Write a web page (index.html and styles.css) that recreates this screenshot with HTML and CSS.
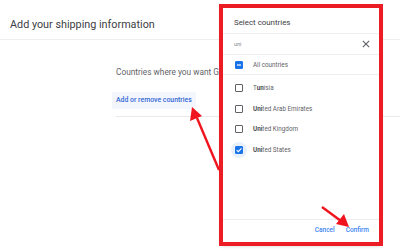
FILE: index.html
```html
<!DOCTYPE html>
<html>
<head>
<meta charset="utf-8">
<link rel="stylesheet" href="styles.css">
</head>
<body>
<div class="page">
  <header class="page-head">
    <h1 class="page-title">Add your shipping information</h1>
  </header>
  <section class="page-body">
    <p class="section-label">Countries where you want Google to show your products</p>
    <div class="link-row">
      <span class="link-btn">Add or remove countries</span>
    </div>
    <div class="section-rule"></div>
  </section>
</div>

<div class="dialog">
  <div class="dlg-title">Select countries</div>
  <div class="dlg-search">
    <span class="search-text">uni</span>
    <svg class="close-icon" viewBox="0 0 10 10" width="8" height="8"><path d="M1 1 L9 9 M9 1 L1 9" stroke="#5f6368" stroke-width="1.4" fill="none"/></svg>
  </div>
  <div class="dlg-all">
    <span class="cb cb-on"><svg viewBox="0 0 8 8" width="8" height="8"><path d="M2 4 H6" stroke="#fff" stroke-width="1.2"/></svg></span>
    <span class="row-text">All countries</span>
  </div>
  <ul class="dlg-list">
    <li class="dlg-row"><span class="cb"></span><span class="row-text">T<b>un</b>isia</span></li>
    <li class="dlg-row"><span class="cb"></span><span class="row-text"><b>Uni</b>ted Arab Emirates</span></li>
    <li class="dlg-row"><span class="cb"></span><span class="row-text"><b>Uni</b>ted Kingdom</span></li>
    <li class="dlg-row"><span class="cb-halo"><span class="cb cb-on"><svg viewBox="0 0 8 8" width="8" height="8"><path d="M1.6 4.1 L3.3 5.7 L6.5 2.4" stroke="#fff" stroke-width="1.1" fill="none"/></svg></span></span><span class="row-text"><b>Uni</b>ted States</span></li>
  </ul>
  <div class="dlg-foot">
    <span class="foot-btn">Cancel</span>
    <span class="foot-btn">Confirm</span>
  </div>
</div>

<div class="red-frame"></div>

<svg class="arrows" width="400" height="252" viewBox="0 0 400 252">
  <line x1="219" y1="170" x2="197" y2="118" stroke="#f0141e" stroke-width="2.4"/>
  <polygon points="192,107 190,121 202,116" fill="#f0141e"/>
  <line x1="322" y1="207" x2="341" y2="221" stroke="#f0141e" stroke-width="2.4"/>
  <polygon points="349,227 336,224 344,214" fill="#f0141e"/>
</svg>
</body>
</html>
```

FILE: styles.css
```css
* { box-sizing: border-box; }
html, body {
  margin: 0;
  padding: 0;
  width: 400px;
  height: 252px;
  overflow: hidden;
  background: #fff;
  font-family: Roboto, "Noto Sans", "Liberation Sans", sans-serif;
  position: relative;
}
.page { width: 400px; }
.page-head {
  height: 40px;
  border-bottom: 1px solid #eceef1;
  display: flex;
  align-items: center;
  padding: 0 0 0 10px;
}
.page-title {
  margin: 0;
  margin-top: 9px;
  font-size: 10.8px;
  font-weight: 400;
  color: #3c4043;
}
.page-body {
  padding-left: 116px;
  padding-top: 27px;
}
.section-label {
  margin: 0;
  font-size: 8.3px;
  line-height: 10px;
  color: #5f6368;
  white-space: nowrap;
}
.link-row {
  margin-top: 10px;
  margin-left: -4px;
}
.link-btn {
  display: inline-block;
  background: #f3f6fc;
  padding: 5px 4px;
  height: 17px;
  font-size: 6.9px;
  line-height: 7px;
  font-weight: 500;
  color: #3367d6;
  border-radius: 2px;
}
.section-rule {
  margin-top: 7px;
  border-top: 1px solid #e8eaed;
}

.dialog {
  position: absolute;
  left: 222px;
  top: 7px;
  width: 158px;
  height: 237px;
  background: #fff;
  box-shadow: 0 1px 4px rgba(60,64,67,0.45);
  display: flex;
  flex-direction: column;
}
.dlg-title {
  height: 27px;
  padding: 11px 0 0 12px;
  font-size: 7.9px;
  color: #3c4043;
  border-bottom: 1px solid #eceef1;
}
.dlg-search {
  height: 21px;
  display: flex;
  align-items: center;
  justify-content: space-between;
  padding: 0 10px 0 12px;
  border-bottom: 1px solid #eceef1;
}
.search-text {
  font-size: 5.5px;
  color: #80868b;
}
.close-icon { display: block; }
.dlg-all {
  height: 20px;
  display: flex;
  align-items: center;
  padding-left: 13px;
  border-bottom: 1px solid #eceef1;
}
.dlg-list {
  list-style: none;
  margin: 0;
  padding: 3px 0 0 0;
  flex: 1;
}
.dlg-row {
  height: 20.5px;
  display: flex;
  align-items: center;
  padding-left: 13px;
}
.cb {
  width: 8px;
  height: 8px;
  border: 1.2px solid #5f6368;
  border-radius: 1px;
  flex: none;
  display: flex;
  align-items: center;
  justify-content: center;
}
.cb svg { display: block; flex: none; }
.cb-on {
  background: #1a73e8;
  border-color: #1a73e8;
}
.cb-halo {
  width: 16px;
  height: 16px;
  margin-left: -4px;
  margin-right: -4px;
  border-radius: 50%;
  background: #e8f0fe;
  display: flex;
  align-items: center;
  justify-content: center;
  flex: none;
}
.row-text {
  margin-left: 10px;
  font-size: 6.3px;
  color: #5f6368;
}
.row-text b { font-weight: 700; color: #4a4e52; }
.dlg-foot {
  height: 25px;
  border-top: 1px solid #eceef1;
  display: flex;
  align-items: center;
  justify-content: flex-end;
  gap: 11px;
  padding: 0 11px 4px 0;
}
.foot-btn {
  font-size: 6.5px;
  font-weight: 500;
  color: #4285f4;
}
.red-frame {
  position: absolute;
  left: 219px;
  top: 4px;
  width: 164px;
  height: 242px;
  border: 4px solid #ec1c24;
}
.arrows {
  position: absolute;
  left: 0;
  top: 0;
}
```
